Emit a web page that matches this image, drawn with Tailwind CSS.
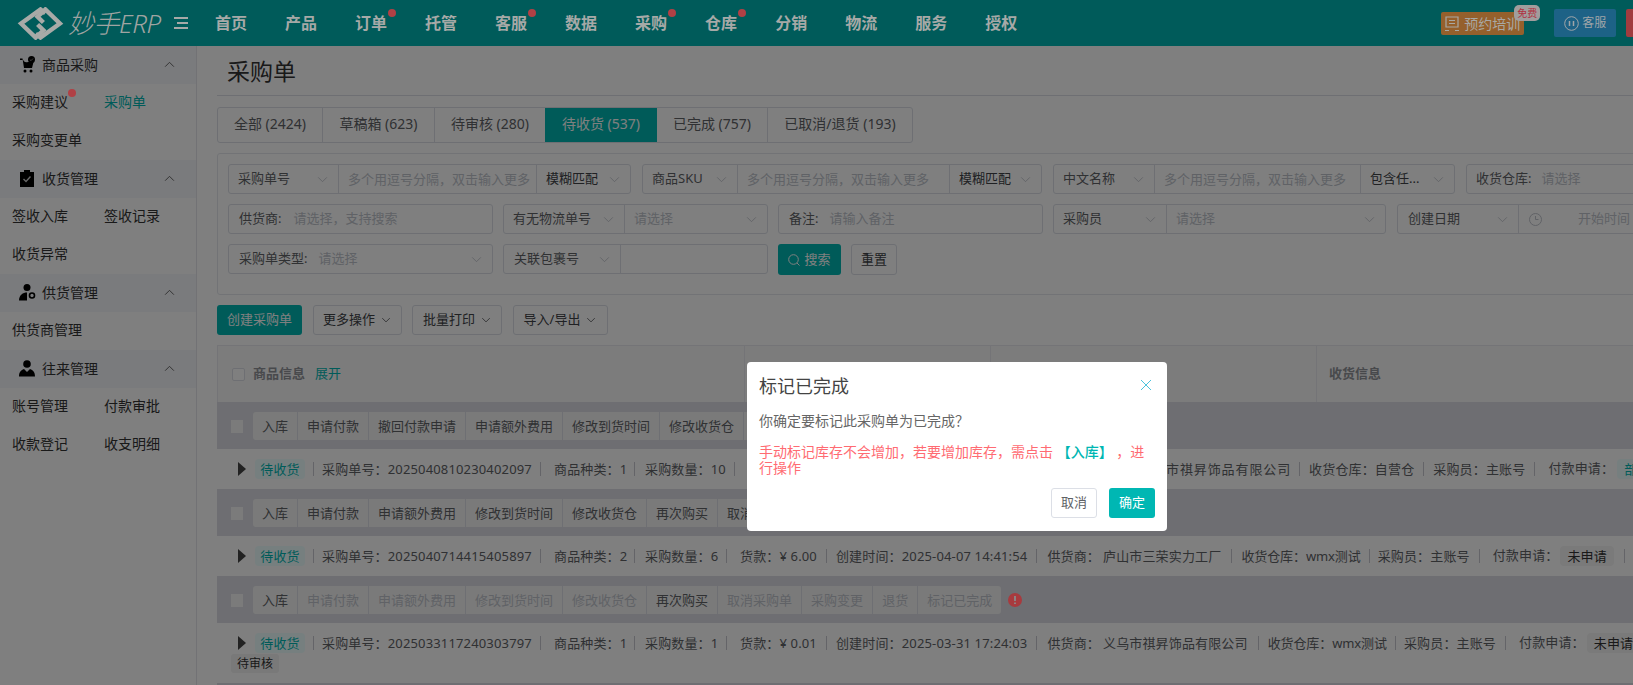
<!DOCTYPE html>
<html lang="zh-CN">
<head>
    <meta charset="UTF-8">
    <meta name="viewport" content="width=device-width, initial-scale=1.0">
    <title>采购单 - 妙手ERP</title>
    <script src="https://cdn.jsdelivr.net/npm/@tailwindcss/browser@4"></script>
</head>
<body class="w-[1633px] h-[685px] overflow-hidden bg-white font-['Noto_Sans','Noto_Sans_CJK_SC',sans-serif] text-[13px] text-[#606266]">

    <svg class="hidden">
        <symbol id="chev-down" viewBox="0 0 12 8"><path d="M1 1.5l5 5 5-5" fill="none" stroke="currentColor" stroke-width="1"/></symbol>
        <symbol id="chev-up" viewBox="0 0 12 8"><path d="M1 6.5l5-5 5 5" fill="none" stroke="currentColor" stroke-width="1"/></symbol>
    </svg>

    <!-- 顶部导航 -->
    <header class="relative z-[60] h-[46px] bg-[#005b5a] flex items-center text-[#a6a9a7] overflow-hidden">
        <svg class="ml-[17px] w-[47px] h-[33px] shrink-0" viewBox="0 0 48 34" fill="none" stroke="#a8aaa7" stroke-width="4.5">
            <path d="M29 6.5L24 2.5 4 17l15 14.5 8-7.5-6-6"/>
            <path d="M19 27.5l5 4L44 17 29 2.5 21 10l6 6"/>
        </svg>
        <span class="ml-[4px] w-[92px] shrink-0 text-[26px] italic font-light tracking-[-0.5px] whitespace-nowrap text-[#a0a4a2]">妙手ERP</span>
        <svg class="ml-[13px] w-[16px] h-[14px] shrink-0" viewBox="0 0 16 14" fill="none" stroke="#a6a9a7" stroke-width="2">
            <path d="M1 2h14M4 7h11M1 12h14"/>
        </svg>
        <nav class="ml-[26px] flex gap-[38px] text-[16px] font-semibold whitespace-nowrap">
            <a>首页</a>
            <a>产品</a>
            <a class="relative">订单<i class="absolute right-[-9px] top-[-2px] w-[8px] h-[8px] rounded-full bg-[#b04045]"></i></a>
            <a>托管</a>
            <a class="relative">客服<i class="absolute right-[-9px] top-[-2px] w-[8px] h-[8px] rounded-full bg-[#b04045]"></i></a>
            <a>数据</a>
            <a class="relative">采购<i class="absolute right-[-9px] top-[-2px] w-[8px] h-[8px] rounded-full bg-[#b04045]"></i></a>
            <a class="relative">仓库<i class="absolute right-[-9px] top-[-2px] w-[8px] h-[8px] rounded-full bg-[#b04045]"></i></a>
            <a>分销</a>
            <a>物流</a>
            <a>服务</a>
            <a>授权</a>
        </nav>
        <div class="relative ml-[424px] w-[83px] h-[23px] shrink-0 rounded-[2px] bg-[#95602c] flex items-center pl-[3px] text-[14px] text-[#a8a8a4] whitespace-nowrap">
            <svg class="w-[16px] h-[17px] mr-[4px]" viewBox="0 0 16 17" fill="none" stroke="currentColor" stroke-width="1.2"><path d="M2 2h12v10H2zM5 5.5h6M5 8.5h6M1 15.5h4M11 15.5h4"/></svg>
            预约培训
            <span class="absolute left-[73px] top-[-7px] w-[26px] h-[16px] rounded-[5px] bg-[#a19d9d] text-[10px] leading-[16px] text-center text-[#b03040]">免费</span>
        </div>
        <div class="ml-[30px] w-[62px] h-[28px] shrink-0 rounded-[2px] bg-[#1d6286] flex items-center pl-[10px] text-[12px] text-[#a0a5a8] whitespace-nowrap">
            <svg class="w-[15px] h-[15px] mr-[3px]" viewBox="0 0 15 15" fill="none" stroke="currentColor"><circle cx="7.5" cy="7.5" r="6.8"/><path d="M5.5 5v5M9.5 5v5" stroke-width="1.5"/></svg>
            客服
        </div>
        <div class="ml-[10px] w-[40px] h-[28px] shrink-0 rounded-[2px] bg-[#a13c3f]"></div>
    </header>

    <div class="flex h-[639px]">
        <!-- 左侧菜单 -->
        <aside class="w-[197px] shrink-0 border-r border-[#e4e5ea] text-[14px] text-[#333]">
            <div class="h-[38px] bg-[#f4f6fa] flex items-center pb-[2px] pl-[20px] pr-[21px]">
                <svg class="w-[16px] h-[17px] shrink-0" viewBox="0 0 16 17" fill="#000"><path d="M0 2.5h2.5L4 12h8l1.5-6H8A4 4 0 0 1 3.6 5L3.3 4H0z"/><circle cx="5" cy="15" r="1.5"/><circle cx="11" cy="15" r="1.5"/><circle cx="11.5" cy="3.5" r="3.5"/><path d="M9.8 3.5l1.2 1.2 2-2.2" stroke="#808080" fill="none"/></svg>
                <span class="ml-[6px]">商品采购</span>
                <svg class="ml-auto w-[11px] h-[7px] text-[#555]"><use href="#chev-up"/></svg>
            </div>
            <div class="grid grid-cols-[92px_92px] auto-rows-[38px] leading-[36px] pl-[12px]">
                <a><span class="relative">采购建议<i class="absolute right-[-8px] top-[-3px] w-[8px] h-[8px] rounded-full bg-[#b04045] z-[60]"></i></span></a>
                <a class="text-[#00b7b3]">采购单</a>
                <a>采购变更单</a>
            </div>
            <div class="h-[38px] bg-[#f4f6fa] flex items-center pb-[2px] pl-[20px] pr-[21px]">
                <svg class="w-[14px] h-[17px] shrink-0" viewBox="0 0 14 17"><path d="M0 2h4V0h6v2h4v15H0z" fill="#000"/><path d="M3.5 9l2.5 2.5 4.5-5" stroke="#ccc" stroke-width="1.4" fill="none"/></svg>
                <span class="ml-[8px]">收货管理</span>
                <svg class="ml-auto w-[11px] h-[7px] text-[#555]"><use href="#chev-up"/></svg>
            </div>
            <div class="grid grid-cols-[92px_92px] auto-rows-[38px] leading-[36px] pl-[12px]">
                <a>签收入库</a>
                <a>签收记录</a>
                <a>收货异常</a>
            </div>
            <div class="h-[38px] bg-[#f4f6fa] flex items-center pb-[2px] pl-[19px] pr-[21px]">
                <svg class="w-[17px] h-[17px] shrink-0" viewBox="0 0 17 17" fill="#000"><circle cx="8" cy="3.5" r="3.5"/><path d="M0 16.5C0 11 4 8.5 8 8.5v8z"/><circle cx="13" cy="11.5" r="2.5" fill="none" stroke="#000" stroke-width="1.6"/></svg>
                <span class="ml-[6px]">供货管理</span>
                <svg class="ml-auto w-[11px] h-[7px] text-[#555]"><use href="#chev-up"/></svg>
            </div>
            <div class="grid grid-cols-[92px_92px] auto-rows-[38px] leading-[36px] pl-[12px]">
                <a class="whitespace-nowrap">供货商管理</a>
            </div>
            <div class="h-[38px] bg-[#f4f6fa] flex items-center pb-[2px] pl-[19px] pr-[21px]">
                <svg class="w-[16px] h-[17px] shrink-0" viewBox="0 0 16 17" fill="#000"><circle cx="8" cy="4" r="3.8"/><path d="M0 16.5c0-4.500 2-6.500 5-7.500l3 3 3-3c3 1 5 3 5 7.500z"/></svg>
                <span class="ml-[7px]">往来管理</span>
                <svg class="ml-auto w-[11px] h-[7px] text-[#555]"><use href="#chev-up"/></svg>
            </div>
            <div class="grid grid-cols-[92px_92px] auto-rows-[38px] leading-[36px] pl-[12px]">
                <a>账号管理</a>
                <a>付款审批</a>
                <a>收款登记</a>
                <a>收支明细</a>
            </div>
        </aside>

        <!-- 主体 -->
        <main class="flex-1 min-w-0 pl-[20px] overflow-hidden">
            <div class="w-[1500px]">
                <h1 class="h-[50px] border-b border-[#dcdfe6] pl-[10px] text-[23px] leading-[50px] text-[#333]">采购单</h1>

                <!-- 状态页签 -->
                <div class="mt-[11px] h-[36px] w-max flex border border-[#dcdfe6] rounded-[3px] text-[14px] leading-[32px] whitespace-nowrap">
                    <a class="w-[105px] text-center border-r border-[#dcdfe6]">全部 (2424)</a>
                    <a class="w-[112px] text-center border-r border-[#dcdfe6]">草稿箱 (623)</a>
                    <a class="w-[110px] text-center">待审核 (280)</a>
                    <a class="w-[112px] text-center bg-[#00b7b3] text-white">待收货 (537)</a>
                    <a class="w-[111px] text-center border-r border-[#dcdfe6]">已完成 (757)</a>
                    <a class="w-[144px] text-center">已取消/退货 (193)</a>
                </div>

                <!-- 筛选 -->
                <section class="mt-[10px] h-[142px] pl-[10px] pt-[10px] border border-[#e4e7ed] rounded-[3px] flex flex-col gap-[10px] whitespace-nowrap">
                    <div class="flex gap-[11px]">
                        <div class="w-[403px] h-[30px] shrink-0 flex items-center border border-[#dcdfe6] rounded-[3px]">
                            <span class="w-[110px] h-full shrink-0 flex items-center justify-between pl-[9px] pr-[10px] border-r border-[#dcdfe6]">采购单号<svg class="w-[11px] h-[7px] text-[#c0c4cc]"><use href="#chev-down"/></svg></span>
                            <span class="w-[197px] h-full shrink-0 pl-[9px] leading-[28px] text-[#c0c4cc] overflow-hidden">多个用逗号分隔，双击输入更多</span>
                            <span class="flex-1 h-full flex items-center justify-between pl-[9px] pr-[10px] border-l border-[#dcdfe6] text-[#404246]">模糊匹配<svg class="w-[11px] h-[7px] text-[#c0c4cc]"><use href="#chev-down"/></svg></span>
                        </div>
                        <div class="w-[400px] h-[30px] shrink-0 flex items-center border border-[#dcdfe6] rounded-[3px]">
                            <span class="w-[95px] h-full shrink-0 flex items-center justify-between pl-[9px] pr-[10px] border-r border-[#dcdfe6]">商品SKU<svg class="w-[11px] h-[7px] text-[#c0c4cc]"><use href="#chev-down"/></svg></span>
                            <span class="w-[211px] h-full shrink-0 pl-[9px] leading-[28px] text-[#c0c4cc] overflow-hidden">多个用逗号分隔，双击输入更多</span>
                            <span class="flex-1 h-full flex items-center justify-between pl-[9px] pr-[10px] border-l border-[#dcdfe6] text-[#404246]">模糊匹配<svg class="w-[11px] h-[7px] text-[#c0c4cc]"><use href="#chev-down"/></svg></span>
                        </div>
                        <div class="w-[402px] h-[30px] shrink-0 flex items-center border border-[#dcdfe6] rounded-[3px]">
                            <span class="w-[101px] h-full shrink-0 flex items-center justify-between pl-[9px] pr-[10px] border-r border-[#dcdfe6]">中文名称<svg class="w-[11px] h-[7px] text-[#c0c4cc]"><use href="#chev-down"/></svg></span>
                            <span class="w-[205px] h-full shrink-0 pl-[9px] leading-[28px] text-[#c0c4cc] overflow-hidden">多个用逗号分隔，双击输入更多</span>
                            <span class="flex-1 h-full flex items-center justify-between pl-[9px] pr-[10px] border-l border-[#dcdfe6] text-[#404246]">包含任...<svg class="w-[11px] h-[7px] text-[#c0c4cc]"><use href="#chev-down"/></svg></span>
                        </div>
                        <div class="w-[300px] h-[30px] shrink-0 pl-[9px] flex items-center border border-[#dcdfe6] rounded-[3px]">收货仓库:<span class="ml-[10px] text-[#c0c4cc]">请选择</span></div>
                    </div>
                    <div class="flex gap-[10px]">
                        <div class="w-[265px] h-[30px] shrink-0 pl-[10px] flex items-center border border-[#dcdfe6] rounded-[3px]">供货商:<span class="ml-[12px] text-[#c0c4cc]">请选择，支持搜索</span></div>
                        <div class="w-[265px] h-[30px] shrink-0 flex items-center border border-[#dcdfe6] rounded-[3px]">
                            <span class="w-[121px] h-full shrink-0 flex items-center justify-between pl-[9px] pr-[10px] border-r border-[#dcdfe6]">有无物流单号<svg class="w-[11px] h-[7px] text-[#c0c4cc]"><use href="#chev-down"/></svg></span>
                            <span class="flex-1 h-full flex items-center justify-between pl-[9px] pr-[10px] text-[#c0c4cc]">请选择<svg class="w-[11px] h-[7px]"><use href="#chev-down"/></svg></span>
                        </div>
                        <div class="w-[265px] h-[30px] shrink-0 pl-[10px] flex items-center border border-[#dcdfe6] rounded-[3px]">备注:<span class="ml-[11px] text-[#c0c4cc]">请输入备注</span></div>
                        <div class="w-[333px] h-[30px] shrink-0 flex items-center border border-[#dcdfe6] rounded-[3px]">
                            <span class="w-[113px] h-full shrink-0 flex items-center justify-between pl-[9px] pr-[10px] border-r border-[#dcdfe6]">采购员<svg class="w-[11px] h-[7px] text-[#c0c4cc]"><use href="#chev-down"/></svg></span>
                            <span class="flex-1 h-full flex items-center justify-between pl-[9px] pr-[10px] text-[#c0c4cc]">请选择<svg class="w-[11px] h-[7px]"><use href="#chev-down"/></svg></span>
                        </div>
                        <div class="ml-[1px] w-[300px] h-[30px] shrink-0 flex items-center border border-[#dcdfe6] rounded-[3px]">
                            <span class="w-[121px] h-full shrink-0 flex items-center justify-between pl-[10px] pr-[10px] border-r border-[#dcdfe6]">创建日期<svg class="w-[11px] h-[7px] text-[#c0c4cc]"><use href="#chev-down"/></svg></span>
                            <svg class="ml-[10px] w-[13px] h-[13px] text-[#c0c4cc] shrink-0" viewBox="0 0 13 13" fill="none" stroke="currentColor"><circle cx="6.500" cy="6.500" r="6"/><path d="M6.500 3v3.500h3"/></svg>
                            <span class="ml-[36px] text-[#c0c4cc]">开始时间</span>
                        </div>
                    </div>
                    <div class="flex gap-[10px]">
                        <div class="w-[265px] h-[30px] shrink-0 px-[10px] flex items-center border border-[#dcdfe6] rounded-[3px]">采购单类型:<span class="ml-[11px] text-[#c0c4cc]">请选择</span><svg class="ml-auto w-[11px] h-[7px] text-[#c0c4cc]"><use href="#chev-down"/></svg></div>
                        <div class="w-[265px] h-[30px] shrink-0 flex items-center border border-[#dcdfe6] rounded-[3px]">
                            <span class="w-[117px] h-full shrink-0 flex items-center justify-between pl-[10px] pr-[10px] border-r border-[#dcdfe6]">关联包裹号<svg class="w-[11px] h-[7px] text-[#c0c4cc]"><use href="#chev-down"/></svg></span>
                        </div>
                        <button class="w-[63px] h-[31px] shrink-0 rounded-[3px] bg-[#00b7b3] text-white flex items-center justify-center gap-[4px]">
                            <svg class="w-[12px] h-[12px]" viewBox="0 0 12 12" fill="none" stroke="currentColor"><circle cx="5.500" cy="5.500" r="4.800"/><path d="M9 9l2.500 2.500"/></svg>搜索
                        </button>
                        <button class="w-[46px] h-[31px] shrink-0 border border-[#dcdfe6] rounded-[3px] text-[#404246]">重置</button>
                    </div>
                </section>

                <!-- 操作按钮 -->
                <div class="mt-[10px] h-[30px] flex gap-[10.500px] whitespace-nowrap">
                    <button class="w-[85px] rounded-[3px] bg-[#00b7b3] text-white">创建采购单</button>
                    <button class="w-[89px] border border-[#dcdfe6] rounded-[3px] flex items-center justify-center gap-[6px] text-[#404246]">更多操作<svg class="w-[10px] h-[6px]"><use href="#chev-down"/></svg></button>
                    <button class="w-[90px] border border-[#dcdfe6] rounded-[3px] flex items-center justify-center gap-[6px] text-[#404246]">批量打印<svg class="w-[10px] h-[6px]"><use href="#chev-down"/></svg></button>
                    <button class="w-[95px] border border-[#dcdfe6] rounded-[3px] flex items-center justify-center gap-[6px] text-[#404246]">导入/导出<svg class="w-[10px] h-[6px]"><use href="#chev-down"/></svg></button>
                </div>

                <!-- 表头 -->
                <div class="mt-[10px] h-[57px] flex border-t border-l border-[#e9e9ee] bg-[#f8f8f8] items-stretch whitespace-nowrap">
                    <div class="w-[527px] shrink-0 pl-[14px] flex items-center border-r border-[#e9e9ee]">
                        <i class="w-[13px] h-[13px] border border-[#dcdfe6] rounded-[2px] bg-white"></i>
                        <b class="ml-[8px] font-semibold text-[#909399]">商品信息</b>
                        <span class="ml-[10px] text-[#00b7b3]">展开</span>
                    </div>
                    <div class="w-[246px] shrink-0 border-r border-[#e9e9ee]"></div>
                    <div class="w-[326px] shrink-0 border-r border-[#e9e9ee]"></div>
                    <div class="flex-1 pl-[12px] flex items-center"><b class="font-semibold text-[#909399]">收货信息</b></div>
                </div>

                <!-- 订单 1 -->
                <div class="h-[47px] bg-[#dcdde4] flex items-start pt-[10px] pl-[14px] whitespace-nowrap">
                    <i class="mt-[8px] w-[12px] h-[13px] bg-[#f6f6f6]"></i>
                    <div class="ml-[10px] h-[28px] flex rounded-[3px] bg-[#f5f5f5] leading-[28px]">
                        <a class="px-[9px] border-r border-[#dcdfe6]">入库</a>
                        <a class="px-[9px] border-r border-[#dcdfe6]">申请付款</a>
                        <a class="px-[9px] border-r border-[#dcdfe6]">撤回付款申请</a>
                        <a class="px-[9px] border-r border-[#dcdfe6]">申请额外费用</a>
                        <a class="px-[9px] border-r border-[#dcdfe6]">修改到货时间</a>
                        <a class="px-[9px] border-r border-[#dcdfe6]">修改收货仓</a>
                        <a class="px-[9px] border-r border-[#dcdfe6]">再次购买</a>
                        <a class="px-[9px] border-r border-[#dcdfe6]">取消采购单</a>
                    </div>
                </div>
                <div class="h-[40px] flex items-center pl-[21px] whitespace-nowrap tracking-[0.15px]">
                    <svg class="w-[8px] h-[14px] shrink-0" viewBox="0 0 8 14" fill="#444"><path d="M0 0l8 7-8 7z"/></svg>
                    <span class="ml-[9px] w-[50px] h-[20px] shrink-0 rounded-[4px] bg-[#ecffff] text-center leading-[20px] text-[#00b7b3]">待收货</span>
                    <span class="ml-[8px] px-[8px] border-l border-r border-[#c8c9d0] leading-[14px] w-[228px]">采购单号：2025040810230402097</span>
                    <span class="px-[13px] border-r border-[#c8c9d0] leading-[14px] w-[94px]">商品种类：1</span>
                    <span class="px-[10px] border-r border-[#c8c9d0] leading-[14px] w-[100px]">采购数量：10</span>
                    <span class="ml-[431px] pr-[8px] border-r border-[#c8c9d0] leading-[14px] tracking-[0.9px]">市祺昇饰品有限公司</span>
                    <span class="px-[9px] border-r border-[#c8c9d0] leading-[14px]">收货仓库：自营仓</span>
                    <span class="px-[9px] border-r border-[#c8c9d0] leading-[14px]">采购员：主账号</span>
                    <span class="ml-[13px]">付款申请：</span>
                    <span class="ml-[3px] h-[20px] px-[7px] rounded-[4px] bg-[#ecffff] leading-[20px] text-[#00b7b3]">部分申请</span>
                </div>

                <!-- 订单 2 -->
                <div class="h-[47px] bg-[#dcdde4] flex items-start pt-[10px] pl-[14px] whitespace-nowrap">
                    <i class="mt-[8px] w-[12px] h-[13px] bg-[#f6f6f6]"></i>
                    <div class="ml-[10px] h-[28px] flex rounded-[3px] bg-[#f5f5f5] leading-[28px]">
                        <a class="px-[9px] border-r border-[#dcdfe6]">入库</a>
                        <a class="px-[9px] border-r border-[#dcdfe6]">申请付款</a>
                        <a class="px-[9px] border-r border-[#dcdfe6]">申请额外费用</a>
                        <a class="px-[9px] border-r border-[#dcdfe6]">修改到货时间</a>
                        <a class="px-[9px] border-r border-[#dcdfe6]">修改收货仓</a>
                        <a class="px-[9px] border-r border-[#dcdfe6]">再次购买</a>
                        <a class="px-[9px] border-r border-[#dcdfe6]">取消采购单</a>
                    </div>
                </div>
                <div class="h-[40px] flex items-center pl-[21px] whitespace-nowrap tracking-[0.15px]">
                    <svg class="w-[8px] h-[14px] shrink-0" viewBox="0 0 8 14" fill="#444"><path d="M0 0l8 7-8 7z"/></svg>
                    <span class="ml-[9px] w-[50px] h-[20px] shrink-0 rounded-[4px] bg-[#ecffff] text-center leading-[20px] text-[#00b7b3]">待收货</span>
                    <span class="ml-[8px] px-[8px] border-l border-r border-[#c8c9d0] leading-[14px] w-[228px]">采购单号：2025040714415405897</span>
                    <span class="px-[13px] border-r border-[#c8c9d0] leading-[14px] w-[94px]">商品种类：2</span>
                    <span class="px-[10px] border-r border-[#c8c9d0] leading-[14px] w-[92px]">采购数量：6</span>
                    <span class="pl-[13px] pr-[9px] border-r border-[#c8c9d0] leading-[14px]">货款：¥ 6.00</span>
                    <span class="px-[9px] border-r border-[#c8c9d0] leading-[14px]">创建时间：2025-04-07 14:41:54</span>
                    <span class="px-[10px] border-r border-[#c8c9d0] leading-[14px]">供货商：<span class="ml-[3px]">庐山市三荣实力工厂</span></span>
                    <span class="pl-[9px] pr-[8px] border-r border-[#c8c9d0] leading-[14px] tracking-[-0.1px]">收货仓库：wmx测试</span>
                    <span class="pl-[8px] pr-[9px] border-r border-[#c8c9d0] leading-[14px]">采购员：主账号</span>
                    <span class="ml-[13px]">付款申请：</span>
                    <span class="ml-[2px] h-[20px] px-[7px] rounded-[4px] bg-[#f5f5f5] leading-[20px] text-[#333]">未申请</span>
                    <i class="ml-[10px] w-px h-[14px] bg-[#c8c9d0]"></i>
                </div>

                <!-- 订单 3 -->
                <div class="h-[47px] bg-[#dcdde4] flex items-start pt-[10px] pl-[14px] whitespace-nowrap">
                    <i class="mt-[8px] w-[12px] h-[13px] bg-[#f6f6f6]"></i>
                    <div class="ml-[10px] h-[28px] flex rounded-[3px] bg-[#f5f5f5] leading-[28px] text-[#c0c4cc]">
                        <a class="px-[9px] border-r border-[#dcdfe6] text-[#606266]">入库</a>
                        <a class="px-[9px] border-r border-[#dcdfe6]">申请付款</a>
                        <a class="px-[9px] border-r border-[#dcdfe6]">申请额外费用</a>
                        <a class="px-[9px] border-r border-[#dcdfe6]">修改到货时间</a>
                        <a class="px-[9px] border-r border-[#dcdfe6]">修改收货仓</a>
                        <a class="px-[9px] border-r border-[#dcdfe6] text-[#606266]">再次购买</a>
                        <a class="px-[9px] border-r border-[#dcdfe6]">取消采购单</a>
                        <a class="px-[9px] border-r border-[#dcdfe6]">采购变更</a>
                        <a class="px-[9px] border-r border-[#dcdfe6]">退货</a>
                        <a class="px-[9px]">标记已完成</a>
                    </div>
                    <svg class="relative z-[60] ml-[7px] mt-[7px] w-[14px] h-[14px]" viewBox="0 0 14 14"><circle cx="7" cy="7" r="7" fill="#a83a3e"/><path d="M7 3v5M7 9.500v1.500" stroke="#8a8a8a" stroke-width="1.800"/></svg>
                </div>
                <div class="h-[40px] flex items-center pl-[21px] whitespace-nowrap tracking-[0.15px]">
                    <svg class="w-[8px] h-[14px] shrink-0" viewBox="0 0 8 14" fill="#444"><path d="M0 0l8 7-8 7z"/></svg>
                    <span class="ml-[9px] w-[50px] h-[20px] shrink-0 rounded-[4px] bg-[#ecffff] text-center leading-[20px] text-[#00b7b3]">待收货</span>
                    <span class="ml-[8px] px-[8px] border-l border-r border-[#c8c9d0] leading-[14px] w-[228px]">采购单号：2025033117240303797</span>
                    <span class="px-[13px] border-r border-[#c8c9d0] leading-[14px] w-[94px]">商品种类：1</span>
                    <span class="px-[10px] border-r border-[#c8c9d0] leading-[14px] w-[92px]">采购数量：1</span>
                    <span class="pl-[13px] pr-[9px] border-r border-[#c8c9d0] leading-[14px]">货款：¥ 0.01</span>
                    <span class="px-[9px] border-r border-[#c8c9d0] leading-[14px]">创建时间：2025-03-31 17:24:03</span>
                    <span class="px-[10px] border-r border-[#c8c9d0] leading-[14px]">供货商：<span class="ml-[3px]">义乌市祺昇饰品有限公司</span></span>
                    <span class="pl-[9px] pr-[8px] border-r border-[#c8c9d0] leading-[14px] tracking-[-0.1px]">收货仓库：wmx测试</span>
                    <span class="pl-[8px] pr-[9px] border-r border-[#c8c9d0] leading-[14px]">采购员：主账号</span>
                    <span class="ml-[13px]">付款申请：</span>
                    <span class="ml-[2px] h-[20px] px-[7px] rounded-[4px] bg-[#f5f5f5] leading-[20px] text-[#333]">未申请</span>
                </div>
                <div class="relative -mt-[9px] h-[29px] pl-[14px]"><span class="inline-block h-[19px] px-[6px] rounded-[3px] bg-[#f2f2f2] leading-[19px] text-[12px] text-[#333]">待审核</span></div>
                <div class="h-[20px] bg-[#dcdde4]"></div>
            </div>
        </main>
    </div>

    <!-- 遮罩 + 确认框 -->
    <div class="fixed inset-0 z-50 bg-black/50"></div>
    <div class="fixed z-[70] left-[747px] top-[362px] w-[420px] h-[169px] bg-white rounded-[4px] px-[12px]">
        <div class="h-[48px] flex items-center justify-between">
            <h2 class="text-[18px] text-[#444]">标记已完成</h2>
            <svg class="mr-[3px] mb-[2px] w-[12px] h-[12px] text-[#4cc3dc]" viewBox="0 0 12 12" fill="none" stroke="currentColor"><path d="M1 1l10 10M11 1L1 11"/></svg>
        </div>
        <p class="mt-[1px] text-[14px] leading-[20px] text-[#666]">你确定要标记此采购单为已完成？</p>
        <p class="mt-[13px] text-[14px] leading-[16px] text-[#ff6b72]">手动标记库存不会增加，若要增加库存，需点击 <b class="font-medium text-[#00b7b3]">【入库】</b> ，进行操作</p>
        <div class="mt-[12px] flex justify-end gap-[12px]">
            <button class="w-[46px] h-[30px] border border-[#dcdfe6] rounded-[3px] text-[#606266]">取消</button>
            <button class="w-[46px] h-[30px] rounded-[3px] bg-[#00b7b3] text-white">确定</button>
        </div>
    </div>

</body>
</html>
